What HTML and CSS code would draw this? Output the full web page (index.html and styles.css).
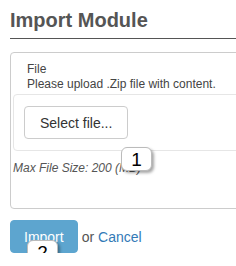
FILE: index.html
```html
<!doctype html>
<html>
<head>
    <meta charset="utf-8">
    <title>Import Module</title>
    <link rel="stylesheet" href="styles.css">
</head>
<body>
	<div class='page'>
		<h2 class='title'>Import Module</h2>
		<div class='panel'>
			<div class='head'>
				<div>File</div>
				<div>Please upload .Zip file with content.</div>
			</div>
			<div class='well'>
				<button class='btn'>Select file...</button>
			</div>
			<div class='note'>Max File Size: 200 (MB)</div>
			<span class='badge one'>1</span>
		</div>
		<div class='actions'>
			<button class='btn primary'>Import</button>
			<span class='or'>or <a href="#">Cancel</a></span>
			<span class='badge two'>2</span>
		</div>
	</div>
</body>
</html>
```

FILE: styles.css
```css
*{margin: 0;padding: 0;box-sizing: border-box;}
html,body{overflow: hidden;}
body{font-family: "Liberation Sans", Arial, sans-serif;color: #444;background: #fff;}
.page{width: 320px;padding-left: 10px;}
.title{
	font-size: 20px;line-height: 24px;font-weight: bold;color: #555;
	margin-top: 8px;padding-bottom: 6px;border-bottom: 1px solid #555;
}
.panel{
	position: relative;margin-top: 13px;height: 157px;
	border: 1px solid #ccc;border-radius: 4px;
}
.head{padding: 9px 16px 0;font-size: 12px;line-height: 15px;}
.well{
	margin: 2px 0 0 2px;padding: 11px 10px;
	border: 1px solid #e6e6e6;border-radius: 4px;
}
.btn{
	font-family: "Liberation Sans", Arial, sans-serif;font-size: 14px;line-height: 20px;
	height: 33px;padding: 0 15px;color: #333;background: #fff;
	border: 1px solid #ccc;border-radius: 4px;
}
.note{margin: 10px 0 0 2px;font-size: 12px;line-height: 15px;font-style: italic;color: #555;}
.actions{position: relative;margin-top: 11px;display: flex;align-items: center;}
.btn.primary{padding: 0 13px;background: #5da5cf;border-color: #5da5cf;color: #fff;}
.or{margin-left: 4px;font-size: 14px;color: #555;}
.or a{color: #337ab7;text-decoration: none;}
.badge{
	position: absolute;width: 31px;height: 24px;
	font-size: 19px;line-height: 24px;text-align: center;color: #000;
	background: #fff;border: 1px solid #bbb;border-radius: 6px;
	box-shadow: 2px 2px 3px rgba(0,0,0,0.35);
}
.badge.one{left: 110px;top: 94px;}
.badge.two{left: 17px;top: 20px;}
```
